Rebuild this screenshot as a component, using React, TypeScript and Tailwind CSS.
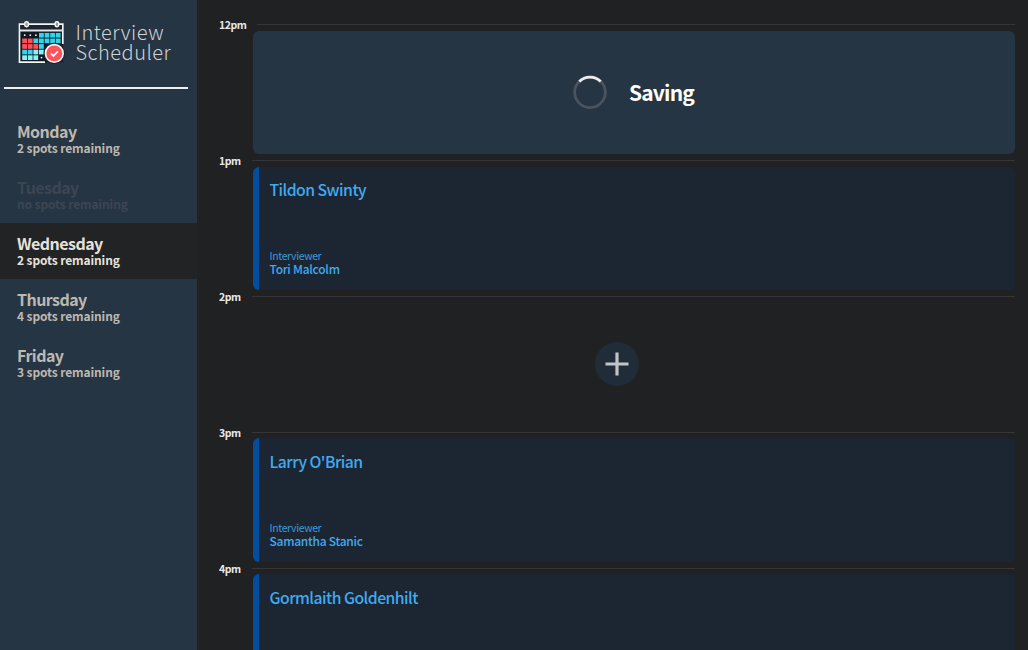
const FONT = "font-['Noto_Sans_CJK_JP','Noto_Sans',sans-serif]";

type Day = { name: string; spots: string; state?: 'full' | 'selected' };

const days: Day[] = [
  { name: 'Monday', spots: '2 spots remaining' },
  { name: 'Tuesday', spots: 'no spots remaining', state: 'full' },
  { name: 'Wednesday', spots: '2 spots remaining', state: 'selected' },
  { name: 'Thursday', spots: '4 spots remaining' },
  { name: 'Friday', spots: '3 spots remaining' },
];

const cellColors = [
  ['', '', '', '#2fd5ec', '#2fd5ec', '#2fd5ec', '#2fd5ec'],
  ['#ff4f5a', '#ff4f5a', '#2fd5ec', '#2fd5ec', '#2fd5ec', '#2fd5ec', '#2fd5ec'],
  ['#ff4f5a', '#ff4f5a', '#ff4f5a', '#2fd5ec'],
  ['#2fd5ec', '#2fd5ec', '#8df0f7', '#8df0f7'],
  ['#8df0f7', '#8df0f7', '#8df0f7', ''],
];

function CalendarLogo() {
  return (
    <svg width="48" height="44" viewBox="0 0 48 44" className="shrink-0">
      <path d="M1 4.2h44v38H1z" fill="#101820" />
      <path d="M27 42.2H1.5V4.2h43.3V24" fill="none" stroke="#f4f4f4" strokeWidth="1.7" />
      <path d="M2.3 5h41.7v4.6h-41.7z" fill="#1c2630" />
      <path d="M1.2 10.5h43.6" stroke="#e4e2ea" strokeWidth="2" />
      {[8.5, 38.8].map((x) => (
        <rect key={x} x={x - 1.7} y="1.8" width="3.6" height="4.9" rx="1.6" fill="#8f979f" stroke="#f4f4f4" strokeWidth="1.5" />
      ))}
      {cellColors.map((row, r) =>
        row.map((color, c) =>
          color ? (
            <rect key={`${r}-${c}`} x={4.2 + c * 5.6} y={12.9 + r * 5.6} width="4.8" height="4.7" fill={color} />
          ) : (
            <circle key={`${r}-${c}`} cx={6.7 + c * 5.6} cy={15.2 + r * 5.6} r="0.9" fill="#f4f4f4" />
          ),
        ),
      )}
      <circle cx="36.3" cy="33.4" r="10.7" fill="#1b2530" />
      <circle cx="36.3" cy="33.4" r="8.8" fill="#ff525b" stroke="#f4f4f4" strokeWidth="1.7" />
      <path d="m33 33.6 2.5 2.4 4.3-4.6" fill="none" stroke="#fff" strokeWidth="1.8" />
    </svg>
  );
}

function DayItem({ name, spots, state }: Day) {
  const tone =
    state === 'selected' ? 'bg-[#222324] text-[#e6e1dc]' : state === 'full' ? 'text-[#3b4651]' : 'text-[#bdb8b0]';
  return (
    <li className={`h-14 pl-[17px] pt-[11px] font-bold whitespace-nowrap ${tone}`}>
      <h2 className="text-[16px] leading-[18px] tracking-[-0.55px]">{name}</h2>
      <p className="text-[12px] leading-[16px] tracking-[-0.12px]">{spots}</p>
    </li>
  );
}

function Appointment({ student, interviewer }: { student: string; interviewer?: string }) {
  return (
    <article className="flex h-full rounded-md border-l-[6px] border-[#044c9c] bg-[#1b2632] pl-[11px] text-[#42aaf0]">
      <div className="flex flex-col justify-between pt-[11.5px] pb-[14.5px] whitespace-nowrap">
        <h2 className="text-[15.75px] leading-6 font-medium tracking-[-0.54px]">{student}</h2>
        {interviewer && (
          <div>
            <h4 className="text-[10.5px] leading-[13px] font-normal tracking-[-0.38px] text-[#3b98d8]">Interviewer</h4>
            <h3 className="text-[12px] leading-[13px] font-medium tracking-[-0.27px]">{interviewer}</h3>
          </div>
        )}
      </div>
    </article>
  );
}

function Saving() {
  return (
    <article className="flex h-full items-center justify-center gap-[22px] rounded-md bg-[#263543]">
      <svg width="34" height="34" viewBox="0 0 34 34">
        <circle cx="17" cy="17.3" r="15.3" fill="none" stroke="#4b545d" strokeWidth="2.8" />
        <path d="M6.3 6.4a15.3 15.3 0 0 1 21.4 0" fill="none" stroke="#ecedee" strokeWidth="2.8" />
      </svg>
      <h1 className="text-[21px] leading-6 font-bold tracking-[-0.85px] text-white">Saving</h1>
    </article>
  );
}

function Empty() {
  return (
    <div className="flex h-full items-center justify-center pr-[34px]">
      <button className="flex size-11 items-center justify-center rounded-full bg-[#202d38]">
        <svg width="24" height="24" viewBox="0 0 24 24">
          <path d="M12 .5v23M.5 12h23" stroke="#c2c3c4" strokeWidth="3.2" />
        </svg>
      </button>
    </div>
  );
}

const slots = [
  { time: '12pm', content: <Saving /> },
  { time: '1pm', content: <Appointment student="Tildon Swinty" interviewer="Tori Malcolm" /> },
  { time: '2pm', content: <Empty /> },
  { time: '3pm', content: <Appointment student="Larry O'Brian" interviewer="Samantha Stanic" /> },
  { time: '4pm', content: <Appointment student="Gormlaith Goldenhilt" /> },
];

export default function App() {
  return (
    <main className={`flex h-[650px] w-[1028px] overflow-hidden bg-[#202122] ${FONT}`}>
      <aside className="w-[197px] shrink-0 bg-[#263543]">
        <header className="mr-[9px] ml-1 flex h-[89px] items-start border-b-2 border-[#eeeeee] pt-5 pl-[14px]">
          <CalendarLogo />
          <div className="mt-[2px] ml-[9.5px] text-[20px] leading-5 font-light tracking-[0.5px] text-[#d0d2d4]">
            Interview
            <br />
            Scheduler
          </div>
        </header>
        <ul className="pt-[22px]">
          {days.map((day) => (
            <DayItem key={day.name} {...day} />
          ))}
        </ul>
      </aside>
      <section className="flex flex-1 flex-col pt-[18.2px] pr-[13.5px] pl-[22px]">
        {slots.map(({ time, content }) => (
          <div key={time} className="h-[135.9px] shrink-0">
            <header className="flex h-[12.5px] items-center">
              <h4 className={`mt-px shrink-0 text-[10.5px] leading-3 font-bold tracking-[-0.5px] text-[#e8e8e8] ${time === '12pm' ? 'w-[38px]' : 'w-[33px]'}`}>
                {time}
              </h4>
              <hr className="flex-1 border-t-[1.5px] border-[#363636]" />
            </header>
            <div className="ml-[33.5px] h-[123.4px]">{content}</div>
          </div>
        ))}
      </section>
    </main>
  );
}
